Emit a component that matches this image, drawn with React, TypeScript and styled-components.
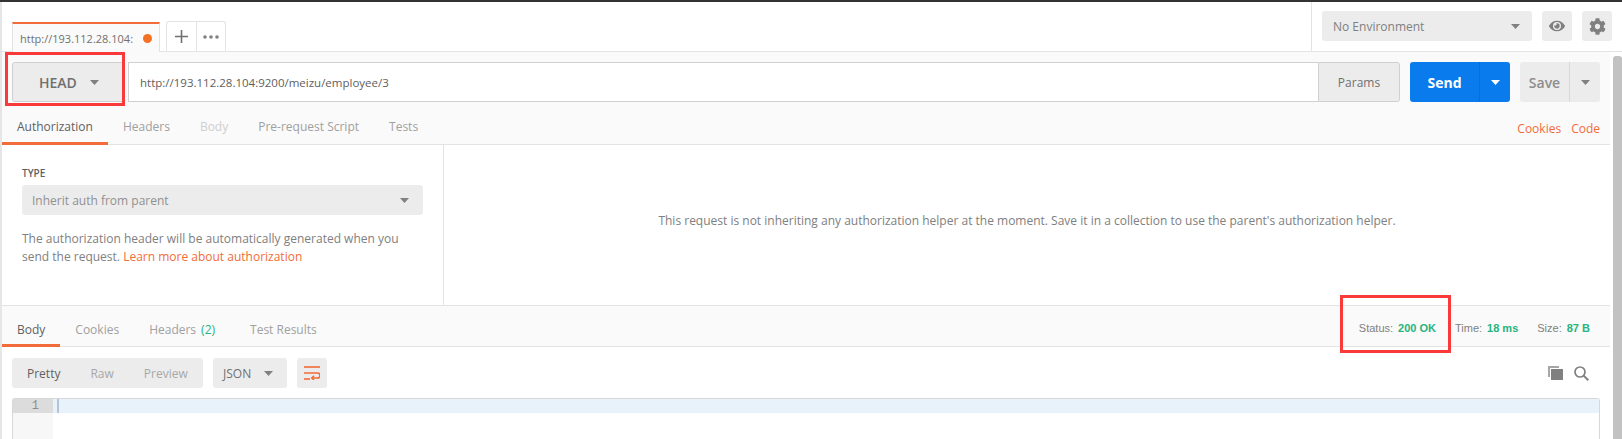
import { createGlobalStyle, styled } from "styled-components";
import { FaCog, FaEye } from "react-icons/fa";

const GlobalStyle = createGlobalStyle`
  html, body {
    margin: 0;
    padding: 0;
    width: 1622px;
    height: 439px;
    overflow: hidden;
    background: #fff;
    font-family: "Open Sans", "Noto Sans", sans-serif;
    -webkit-font-smoothing: antialiased;
  }
  * { box-sizing: border-box; }
`;

const ORANGE = "#f26b3a";
const GREEN = "#26b47f";

const Page = styled.div`
  position: relative;
  width: 1622px;
  height: 439px;
  overflow: hidden;
  border-top: 2px solid #333;
  display: flex;
  flex-direction: column;
`;

const Header = styled.header`
  height: 50px;
  flex: none;
  display: flex;
  background: #fff;
  border-bottom: 1px solid #e3e3e3;
`;

const TabStrip = styled.div`
  flex: 1;
  display: flex;
  align-items: flex-end;
  padding-left: 10px;
  border-left: 2px solid #e6e6e6;
`;

const RequestTab = styled.div`
  width: 148px;
  height: 30px;
  margin-bottom: -1px;
  border: 1px solid #e3e3e3;
  border-top: 2px solid ${ORANGE};
  border-bottom: 0;
  background: #fafafa;
  display: flex;
  align-items: center;
  padding-left: 7px;
  font-size: 11px;
  color: #707070;
`;

const Dot = styled.span`
  width: 9px;
  height: 9px;
  border-radius: 50%;
  background: #f47023;
  margin-left: 10px;
`;

const TabActions = styled.div`
  display: flex;
  height: 30px;
  margin-left: 6px;
  border: 1px solid #e3e3e3;
  border-bottom: 0;
  border-radius: 3px 3px 0 0;
`;

const TabAction = styled.div`
  width: 29px;
  display: flex;
  align-items: center;
  justify-content: center;
  & + & { border-left: 1px solid #e3e3e3; }
`;

const EnvArea = styled.div`
  width: 311px;
  flex: none;
  border-left: 1px solid #e3e3e3;
  display: flex;
  align-items: flex-start;
  padding: 9px 10px 0 10px;
  gap: 10px;
`;

const EnvSelect = styled.div`
  width: 210px;
  height: 30px;
  background: #ececec;
  border-radius: 3px;
  display: flex;
  align-items: center;
  justify-content: space-between;
  padding: 0 12px 0 11px;
  font-size: 12px;
  color: #808080;
`;

const IconButton = styled.div`
  width: 30px;
  height: 30px;
  background: #ececec;
  border-radius: 3px;
  display: flex;
  align-items: center;
  justify-content: center;
  color: #808080;
`;

const Workspace = styled.div`
  flex: 1;
  min-height: 0;
  display: flex;
`;

const Main = styled.main`
  width: 1610px;
  flex: none;
  border-left: 2px solid #e6e6e6;
  background: #fafafa;
  display: flex;
  flex-direction: column;
  min-height: 0;
`;

const ScrollTrack = styled.div`
  width: 12px;
  flex: none;
  padding: 4px 0 0 3px;
  background: #fff;
`;

const ScrollThumb = styled.div`
  height: 100%;
  background: #c2c2c2;
  border-radius: 3px 3px 0 0;
`;

const RequestRow = styled.div`
  height: 53px;
  flex: none;
  display: flex;
  align-items: flex-start;
  padding: 10px 10px 0 10px;
`;

const MethodSelect = styled.div`
  width: 111px;
  height: 40px;
  flex: none;
  background: #ececec;
  border: 1px solid #d0d0d0;
  border-radius: 3px 0 0 3px;
  display: flex;
  align-items: center;
  padding-left: 26px;
  gap: 13px;
  font-size: 14px;
  font-weight: 600;
  color: #707070;
`;

const UrlInput = styled.div`
  flex: 1;
  height: 40px;
  margin-left: 5px;
  background: #fff;
  border: 1px solid #d0d0d0;
  border-right: 0;
  display: flex;
  align-items: center;
  padding-left: 11px;
  font-size: 11.5px;
  color: #606060;
`;

const ParamsButton = styled.div`
  width: 82px;
  height: 40px;
  flex: none;
  background: #ececec;
  border: 1px solid #d0d0d0;
  border-radius: 0 3px 3px 0;
  display: flex;
  align-items: center;
  justify-content: center;
  font-size: 12px;
  color: #707070;
`;

const SplitButton = styled.div<{ $primary?: boolean; $width: number }>`
  width: ${(p) => p.$width}px;
  height: 40px;
  flex: none;
  margin-left: 10px;
  border-radius: 3px;
  display: flex;
  background: ${(p) => (p.$primary ? "#097bed" : "#ececec")};
  color: ${(p) => (p.$primary ? "#fff" : "#8c8c8c")};
  font-size: 14px;
  font-weight: ${(p) => (p.$primary ? 700 : 600)};
`;

const SplitLabel = styled.div`
  flex: 1;
  display: flex;
  align-items: center;
  justify-content: center;
`;

const SplitCaret = styled.div<{ $line: string }>`
  width: 31px;
  flex: none;
  border-left: 1px solid ${(p) => p.$line};
  display: flex;
  align-items: center;
  justify-content: center;
`;

const TabsRow = styled.div<{ $height: number; $textDrop: number }>`
  height: ${(p) => p.$height}px;
  flex: none;
  display: flex;
  align-items: stretch;
  border-bottom: 1px solid #e3e3e3;
  font-size: 12px;
  --text-drop: ${(p) => p.$textDrop}px;
`;

const TabItem = styled.div<{ $active?: boolean; $faded?: boolean }>`
  flex: none;
  display: flex;
  align-items: center;
  padding: var(--text-drop) 15px 0;
  margin-bottom: -1px;
  border-bottom: 3px solid ${(p) => (p.$active ? ORANGE : "transparent")};
  color: ${(p) => (p.$active ? "#606060" : p.$faded ? "#cfcfcf" : "#a0a0a0")};
`;

const LastTabItem = styled(TabItem)`
  margin-left: 5px;
`;

const CountBadge = styled.span`
  color: ${GREEN};
  margin-left: 5px;
`;

const LinkGroup = styled.div`
  margin-left: auto;
  padding: 8px 10px 0 0;
  display: flex;
  align-items: center;
  gap: 10px;
`;

const OrangeLink = styled.span`
  color: ${ORANGE};
`;

const AuthPane = styled.section`
  height: 161px;
  flex: none;
  display: flex;
  background: #fff;
  border-bottom: 1px solid #e3e3e3;
`;

const AuthForm = styled.div`
  width: 442px;
  flex: none;
  border-right: 1px solid #e3e3e3;
  padding: 21px 20px 0 20px;
`;

const FieldLabel = styled.div`
  font-size: 10px;
  font-weight: 600;
  line-height: 14px;
  color: #606060;
`;

const TypeSelect = styled.div`
  height: 30px;
  margin-top: 5px;
  width: 401px;
  background: #ececec;
  border-radius: 3px;
  display: flex;
  align-items: center;
  justify-content: space-between;
  padding: 0 14px 0 10px;
  font-size: 12px;
  color: #909090;
`;

const HelpText = styled.p`
  margin: 15px 0 0;
  font-size: 12px;
  line-height: 18px;
  color: #808080;
`;

const AuthMessage = styled.div`
  flex: 1;
  display: flex;
  align-items: center;
  justify-content: center;
  padding-bottom: 10px;
  font-size: 12px;
  color: #808080;
`;

const StatusGroup = styled.div`
  margin-left: auto;
  display: flex;
  align-items: center;
  gap: 19px;
  padding: 3px 20px 0 0;
  font-family: "Liberation Sans", Arial, sans-serif;
  font-size: 11px;
`;

const StatusItem = styled.div`
  color: #808080;
`;

const StatusValue = styled.span`
  color: ${GREEN};
  font-weight: 700;
  margin-left: 5px;
`;

const ResponseBody = styled.section`
  flex: 1;
  min-height: 0;
  background: #fff;
  padding: 11px 10px 0 10px;
`;

const Toolbar = styled.div`
  height: 30px;
  display: flex;
  align-items: stretch;
  gap: 10px;
  font-size: 12px;
`;

const ModeGroup = styled.div`
  width: 191px;
  background: #ececec;
  border-radius: 3px;
  display: flex;
  align-items: center;
  padding-left: 15px;
  gap: 30px;
`;

const ModeItem = styled.span<{ $active?: boolean }>`
  color: ${(p) => (p.$active ? "#606060" : "#a8a8a8")};
`;

const FormatSelect = styled.div`
  width: 74px;
  background: #ececec;
  border-radius: 3px;
  display: flex;
  align-items: center;
  justify-content: space-between;
  padding: 0 14px 0 10px;
  color: #707070;
`;

const WrapButton = styled.div`
  width: 30px;
  background: #ececec;
  border-radius: 3px;
  display: flex;
  align-items: center;
  justify-content: center;
`;

const ToolIcons = styled.div`
  margin-left: auto;
  display: flex;
  align-items: center;
  gap: 11px;
  padding-right: 11px;
`;

const Editor = styled.div`
  margin-top: 10px;
  height: 60px;
  width: 1588px;
  border: 1px solid #d8d8d8;
  border-bottom: 0;
  border-radius: 3px 3px 0 0;
  display: flex;
  background: #fff;
`;

const Gutter = styled.div`
  width: 40px;
  flex: none;
  background: #f7f7f7;
`;

const GutterLine = styled.div`
  height: 14px;
  background: #dcdcdc;
  color: #8c8c8c;
  font-size: 12px;
  line-height: 15px;
  text-align: right;
  padding-right: 14px;
  font-family: "Liberation Mono", monospace;
`;

const CodeLine = styled.div`
  flex: 1;
  height: 14px;
  background: #e8f2fb;
  border-left: 2px solid #b4c4d4;
  margin-left: 4px;
  box-shadow: -4px 0 0 #e8f2fb;
`;

const Highlight = styled.div<{ $left: number; $top: number; $width: number; $height: number }>`
  position: absolute;
  left: ${(p) => p.$left}px;
  top: ${(p) => p.$top}px;
  width: ${(p) => p.$width}px;
  height: ${(p) => p.$height}px;
  border: 3px solid #f93a3a;
  pointer-events: none;
`;

const Caret = ({ color = "#808080" }: { color?: string }) => (
  <svg width="9" height="5" viewBox="0 0 9 5" style={{ flex: "none" }}>
    <path d="M0 0h9L4.500 5z" fill={color} />
  </svg>
);

const PlusIcon = () => (
  <svg width="13" height="13" viewBox="0 0 13 13">
    <path d="M5.700 0h1.600v5.700H13v1.600H7.300V13H5.700V7.300H0V5.700h5.700z" fill="#707070" />
  </svg>
);

const DotsIcon = () => (
  <svg width="16" height="4" viewBox="0 0 16 4">
    <circle cx="2" cy="2" r="1.800" fill="#808080" />
    <circle cx="8" cy="2" r="1.800" fill="#808080" />
    <circle cx="14" cy="2" r="1.800" fill="#808080" />
  </svg>
);

const WrapIcon = () => (
  <svg width="16" height="14" viewBox="0 0 16 14" fill="none" stroke={ORANGE} strokeWidth="1.600">
    <path d="M0 1h16" />
    <path d="M0 7h13.500a2.300 2.300 0 0 1 0 5H8" />
    <path d="M10 9.800 7.800 12l2.200 2" />
    <path d="M0 13h6" />
  </svg>
);

const CopyIcon = () => (
  <svg width="15" height="14" viewBox="0 0 15 14" fill="#808080">
    <path d="M0 0h11v2H2v9H0z" opacity=".7" />
    <path d="M3 3h12v11H3z" />
  </svg>
);

const SearchIcon = () => (
  <svg width="15" height="15" viewBox="0 0 15 15" fill="none" stroke="#808080" strokeWidth="1.700">
    <circle cx="6" cy="6" r="5" />
    <path d="M9.600 9.600 14.300 14.300" strokeWidth="2" />
  </svg>
);

export default function App() {
  return (
    <Page>
      <GlobalStyle />
      <Header>
        <TabStrip>
          <RequestTab>
            http://193.112.28.104:
            <Dot />
          </RequestTab>
          <TabActions>
            <TabAction><PlusIcon /></TabAction>
            <TabAction><DotsIcon /></TabAction>
          </TabActions>
        </TabStrip>
        <EnvArea>
          <EnvSelect>
            No Environment
            <Caret />
          </EnvSelect>
          <IconButton><FaEye size={16} /></IconButton>
          <IconButton><FaCog size={17} /></IconButton>
        </EnvArea>
      </Header>
      <Workspace>
        <Main>
          <RequestRow>
            <MethodSelect>
              HEAD
              <Caret />
            </MethodSelect>
            <UrlInput>http://193.112.28.104:9200/meizu/employee/3</UrlInput>
            <ParamsButton>Params</ParamsButton>
            <SplitButton $primary $width={100}>
              <SplitLabel>Send</SplitLabel>
              <SplitCaret $line="#0a6fd4"><Caret color="#fff" /></SplitCaret>
            </SplitButton>
            <SplitButton $width={80}>
              <SplitLabel>Save</SplitLabel>
              <SplitCaret $line="#d8d8d8"><Caret /></SplitCaret>
            </SplitButton>
          </RequestRow>
          <TabsRow $height={40} $textDrop={6}>
            <TabItem $active>Authorization</TabItem>
            <TabItem>Headers</TabItem>
            <TabItem $faded>Body</TabItem>
            <TabItem>Pre-request Script</TabItem>
            <TabItem>Tests</TabItem>
            <LinkGroup>
              <OrangeLink>Cookies</OrangeLink>
              <OrangeLink>Code</OrangeLink>
            </LinkGroup>
          </TabsRow>
          <AuthPane>
            <AuthForm>
              <FieldLabel>TYPE</FieldLabel>
              <TypeSelect>
                Inherit auth from parent
                <Caret />
              </TypeSelect>
              <HelpText>
                The authorization header will be automatically generated when you send the request.{" "}
                <OrangeLink>Learn more about authorization</OrangeLink>
              </HelpText>
            </AuthForm>
            <AuthMessage>
              This request is not inheriting any authorization helper at the moment. Save it in a collection to use the parent's authorization helper.
            </AuthMessage>
          </AuthPane>
          <TabsRow $height={41} $textDrop={8}>
            <TabItem $active>Body</TabItem>
            <TabItem>Cookies</TabItem>
            <TabItem>Headers<CountBadge>(2)</CountBadge></TabItem>
            <LastTabItem>Test Results</LastTabItem>
            <StatusGroup>
              <StatusItem>Status:<StatusValue>200 OK</StatusValue></StatusItem>
              <StatusItem>Time:<StatusValue>18 ms</StatusValue></StatusItem>
              <StatusItem>Size:<StatusValue>87 B</StatusValue></StatusItem>
            </StatusGroup>
          </TabsRow>
          <ResponseBody>
            <Toolbar>
              <ModeGroup>
                <ModeItem $active>Pretty</ModeItem>
                <ModeItem>Raw</ModeItem>
                <ModeItem>Preview</ModeItem>
              </ModeGroup>
              <FormatSelect>
                JSON
                <Caret />
              </FormatSelect>
              <WrapButton><WrapIcon /></WrapButton>
              <ToolIcons>
                <CopyIcon />
                <SearchIcon />
              </ToolIcons>
            </Toolbar>
            <Editor>
              <Gutter><GutterLine>1</GutterLine></Gutter>
              <CodeLine />
            </Editor>
          </ResponseBody>
        </Main>
        <ScrollTrack><ScrollThumb /></ScrollTrack>
      </Workspace>
      <Highlight $left={5} $top={50} $width={120} $height={54} />
      <Highlight $left={1340} $top={293} $width={111} $height={58} />
    </Page>
  );
}
